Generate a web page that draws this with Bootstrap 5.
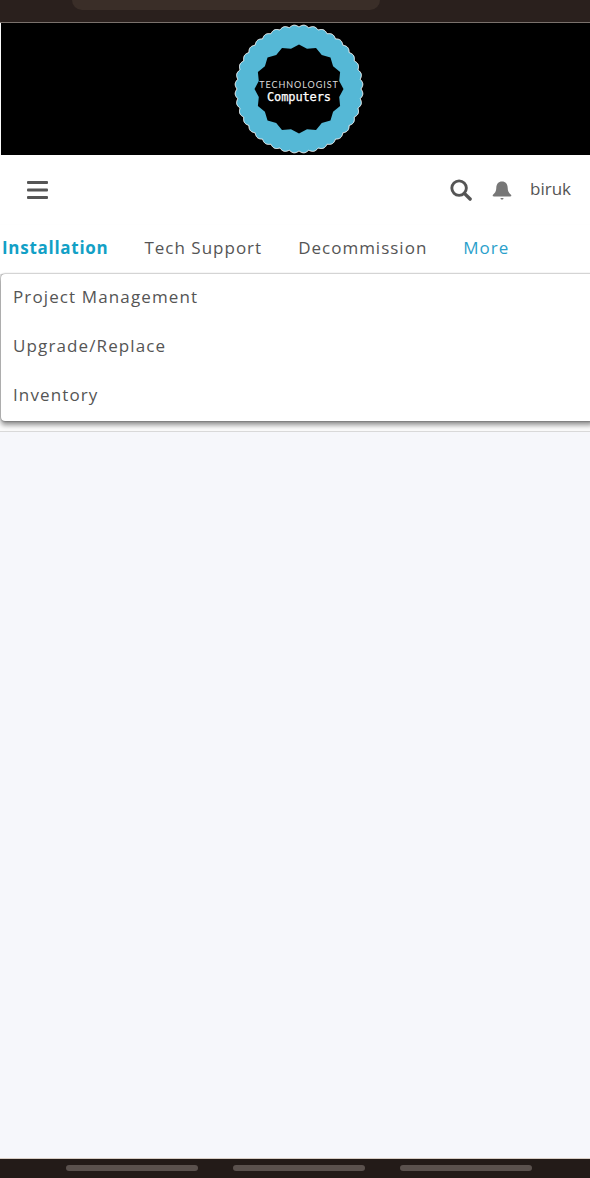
<!DOCTYPE html>
<html lang="en">
<head>
  <meta charset="UTF-8" />
  <title>Technologist Computers</title>
  <meta name="viewport" content="width=device-width, initial-scale=1" />
  <link href="https://cdn.jsdelivr.net/npm/bootstrap@5.3.0/dist/css/bootstrap.min.css" rel="stylesheet" />
  <style>
    html, body {
      height: 100%;
      overflow: hidden;
    }

    body {
      background: #f6f7fb;
      color: #555;
      font-family: "Open Sans", "Noto Sans", sans-serif;
    }

    #appShell {
      height: 1178px;
    }

    .status-strip {
      height: 23px;
      background: #2a201d;
      border-bottom: 1px solid #7a716c;
    }

    .status-pill {
      width: 308px;
      height: 10px;
      margin-left: 72px;
      background: #3a2e28;
      border-radius: 0 0 22px 22px;
    }

    .logo-banner {
      height: 132px;
      margin-left: 1px;
      padding-left: 7px;
      background: #000;
    }

    .logo-title {
      font-family: Lato, sans-serif;
      font-size: 9px;
      letter-spacing: .95px;
      fill: #ddd;
    }

    .logo-sub {
      font-family: "DejaVu Sans Mono", monospace;
      font-size: 12px;
      fill: #fff;
      stroke: #fff;
      stroke-width: .25px;
    }

    .top-nav {
      height: 70px;
      padding: 0 19px 0 27px;
      background: #fff;
    }

    .top-nav svg {
      display: block;
    }

    .user-name {
      font-size: 17px;
      line-height: 1;
      margin-left: 18px;
      margin-bottom: 4px;
      color: #555;
    }

    .tab-row {
      height: 49px;
      padding: 0 0 4px 2px;
      gap: 36px;
      background: #fff;
      box-shadow: 0 2px 3px rgba(0, 0, 0, .14);
      font-size: 17px;
      letter-spacing: 1px;
      white-space: nowrap;
    }

    .tab-active {
      color: #12a0c6;
      font-weight: 700;
      letter-spacing: .72px;
    }

    .tab-more {
      color: #2a9fcb;
    }

    .more-menu {
      position: absolute;
      top: 274px;
      left: 1px;
      right: -4px;
      height: 147px;
      padding: 0 0 0 12px;
      background: #fff;
      border-radius: 4px;
      box-shadow: 0 0 2px rgba(0, 0, 0, .6), 0 4px 5px rgba(0, 0, 0, .42);
      font-size: 17px;
      letter-spacing: 1.12px;
    }

    .more-menu div {
      height: 49px;
      line-height: 46px;
    }

    .menu-under {
      height: 432px;
      border-bottom: 1px solid #d9d9d9;
      background: #fafafa;
      position: absolute;
      top: 0;
      left: 0;
      right: 0;
      z-index: -1;
    }

    .gesture-bar {
      height: 20px;
      background: #231b18;
      border-top: 1px solid #d8cdc4;
      gap: 35px;
      padding: 6px 0 0 8px;
    }

    .gesture-pill {
      width: 132px;
      height: 6px;
      border-radius: 3px;
      background: #5a514d;
    }
  </style>
</head>
<body>
  <div id="appShell" class="d-flex flex-column position-relative">
    <div class="menu-under"></div>

    <div class="status-strip flex-shrink-0">
      <div class="status-pill"></div>
    </div>

    <!-- logo -->
    <div class="logo-banner d-flex justify-content-center flex-shrink-0">
      <svg width="132" height="132" viewBox="0 0 132 132">
        <path id="logoOuter" fill="#55b8d6" stroke="#fff" stroke-width="1"></path>
        <path id="logoInner" fill="#000"></path>
        <text class="logo-title" x="66" y="65" text-anchor="middle">TECHNOLOGIST</text>
        <text class="logo-sub" x="66" y="78" text-anchor="middle" textLength="64">Computers</text>
      </svg>
    </div>

    <nav class="top-nav d-flex align-items-center flex-shrink-0">
      <svg width="21" height="18" viewBox="0 0 21 18" class="me-auto">
        <rect y="0" width="21" height="3" rx="1" fill="#555"></rect>
        <rect y="7.5" width="21" height="3" rx="1" fill="#555"></rect>
        <rect y="15" width="21" height="3" rx="1" fill="#555"></rect>
      </svg>
      <svg width="22" height="22" viewBox="0 0 23 23" class="me-3">
        <circle cx="9.5" cy="9.5" r="7.6" fill="none" stroke="#555" stroke-width="3"></circle>
        <path d="M15 15l6 6" stroke="#555" stroke-width="3.6" stroke-linecap="round"></path>
      </svg>
      <svg width="20" height="21" viewBox="0 0 20 21" class="ms-1">
        <path d="M10 1.500c3.600 0 5.700 2.700 5.700 6.500 0 3.600 1.700 5.200 3.300 6.700.7.800.3 1.800-.7 1.800H1.700c-1 0-1.400-1-.7-1.800C2.600 13.200 4.300 11.600 4.300 8c0-3.800 2.100-6.500 5.700-6.500z" fill="#777"></path>
        <path d="M8.500 18h3c0 1-.6 1.600-1.500 1.600S8.500 19 8.500 18z" fill="#777"></path>
      </svg>
      <span class="user-name">biruk</span>
    </nav>

    <div class="tab-row d-flex align-items-center flex-shrink-0">
      <span class="tab-active">Installation</span>
      <span>Tech Support</span>
      <span>Decommission</span>
      <span class="tab-more">More</span>
    </div>

    <div class="more-menu">
      <div>Project Management</div>
      <div>Upgrade/Replace</div>
      <div>Inventory</div>
    </div>

    <div class="flex-grow-1"></div>

    <div class="gesture-bar d-flex justify-content-center flex-shrink-0">
      <div class="gesture-pill"></div>
      <div class="gesture-pill"></div>
      <div class="gesture-pill"></div>
    </div>
  </div>

  <script src="https://cdn.jsdelivr.net/npm/bootstrap@5.3.0/dist/js/bootstrap.bundle.min.js"></script>
  <script>
    // scalloped ring of the logo
    function wavyCircle(radius, depth, bumps) {
      let d = "";
      for (let i = 0; i < 720; i++) {
        const a = i * Math.PI / 360;
        const r = radius + depth * Math.abs(Math.sin(a * bumps / 2));
        d += (i ? "L" : "M") + (66 + r * Math.cos(a)).toFixed(2) + " " + (66 + r * Math.sin(a)).toFixed(2);
      }
      return d + "Z";
    }

    function spikyCircle(radius, depth, points) {
      let d = "";
      for (let i = 0; i < points * 2; i++) {
        const a = i * Math.PI / points;
        const r = i % 2 ? radius : radius + depth;
        d += (i ? "L" : "M") + (66 + r * Math.cos(a)).toFixed(2) + " " + (66 + r * Math.sin(a)).toFixed(2);
      }
      return d + "Z";
    }

    document.getElementById("logoOuter").setAttribute("d", wavyCircle(62, 2, 40));
    document.getElementById("logoInner").setAttribute("d", spikyCircle(41, 3.5, 16));
  </script>
</body>
</html>
